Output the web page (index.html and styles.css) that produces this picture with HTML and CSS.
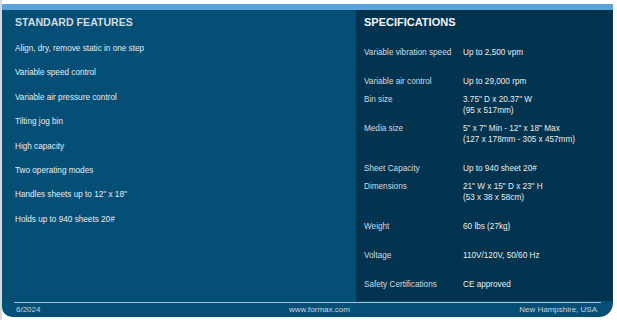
FILE: index.html
```html
<!DOCTYPE html>
<html>
<head>
<meta charset="utf-8">
<link rel="stylesheet" href="styles.css">
</head>
<body>
<div class="sheet">
  <div class="stripe"></div>
  <div class="main">
    <section class="features">
      <h2 class="feat-title">STANDARD FEATURES</h2>
      <ul class="feat-list">
        <li>Align, dry, remove static in one step</li>
        <li>Variable speed control</li>
        <li>Variable air pressure control</li>
        <li>Tilting jog bin</li>
        <li>High capacity</li>
        <li>Two operating modes</li>
        <li>Handles sheets up to 12" x 18"</li>
        <li>Holds up to 940 sheets 20#</li>
      </ul>
    </section>
    <section class="specs">
      <h2 class="spec-title">SPECIFICATIONS</h2>
      <div class="spec-list">
        <div class="spec first"><span class="lbl">Variable vibration speed</span><span class="val">Up to 2,500 vpm</span></div>
        <div class="spec gap"><span class="lbl">Variable air control</span><span class="val">Up to 29,000 rpm</span></div>
        <div class="spec"><span class="lbl">Bin size</span><span class="val">3.75" D x 20.37" W<br>(95 x 517mm)</span></div>
        <div class="spec"><span class="lbl">Media size</span><span class="val">5" x 7" Min - 12" x 18" Max<br>(127 x 178mm - 305 x 457mm)</span></div>
        <div class="spec gap"><span class="lbl">Sheet Capacity</span><span class="val">Up to 940 sheet 20#</span></div>
        <div class="spec"><span class="lbl">Dimensions</span><span class="val">21" W x 15" D x 23" H<br>(53 x 38 x 58cm)</span></div>
        <div class="spec gap"><span class="lbl">Weight</span><span class="val">60 lbs (27kg)</span></div>
        <div class="spec gap"><span class="lbl">Voltage</span><span class="val">110V/120V, 50/60 Hz</span></div>
        <div class="spec gap"><span class="lbl">Safety Certifications</span><span class="val">CE approved</span></div>
      </div>
    </section>
  </div>
  <footer class="footer">
    <div class="footer-row">
      <span class="f-date">6/2024</span>
      <span class="f-url">www.formax.com</span>
      <span class="f-loc">New Hampshire, USA</span>
    </div>
  </footer>
</div>
</body>
</html>
```

FILE: styles.css
```css
html, body {
  margin: 0;
  padding: 0;
  background: #ffffff;
}
body {
  font-family: "Liberation Sans", Arial, sans-serif;
  border-left: 2px solid #d6dadd;
  height: 320px;
  box-sizing: border-box;
}
.sheet {
  width: 611px;
  padding-top: 4px;
}
.stripe {
  height: 6px;
  background: #5ca3d8;
}
.main {
  display: grid;
  grid-template-columns: 354px 257px;
  height: 291px;
}
.features {
  background: #054f77;
  padding: 6px 0 0 13px;
}
.feat-title {
  margin: 0;
  font-size: 10.6px;
  line-height: 13px;
  font-weight: bold;
  color: #d3d9df;
}
.feat-list {
  list-style: none;
  margin: 14px 0 0;
  padding: 0;
}
.feat-list li {
  font-size: 8.2px;
  line-height: 11px;
  height: 24.4px;
  color: #e6ebef;
}
.specs {
  background: #03344f;
  padding: 6px 0 0 8px;
}
.spec-title {
  margin: 0;
  font-size: 11px;
  line-height: 13px;
  font-weight: bold;
  color: #f2f4f6;
}
.spec-list {
  margin-top: 18px;
}
.spec {
  display: flex;
  font-size: 8.2px;
  line-height: 11px;
  margin-top: 7px;
}
.spec.first {
  margin-top: 0;
}
.spec.gap {
  margin-top: 18px;
}
.lbl {
  width: 99px;
  flex: none;
  color: #d2dae2;
}
.val {
  color: #e8ecf0;
}
.footer {
  background: #054f77;
  height: 15px;
  border-bottom-left-radius: 10px;
  border-bottom-right-radius: 14px;
  padding: 1px 12px 0 12px;
}
.footer-row {
  border-top: 1px solid #a9bfcf;
  display: flex;
  align-items: center;
  height: 12px;
  font-size: 8px;
  color: #c9d4dd;
}
.f-date {
  width: 273px;
  padding-left: 2px;
  flex: none;
}
.f-loc {
  margin-left: auto;
  padding-right: 4px;
}
```
